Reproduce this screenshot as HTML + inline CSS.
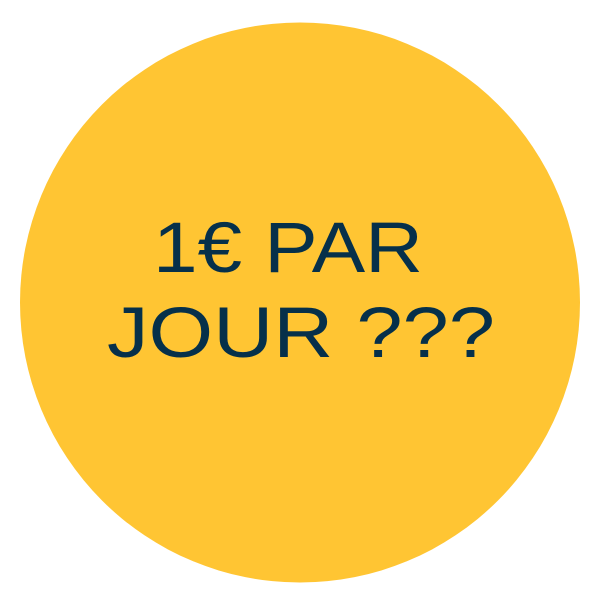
<!DOCTYPE html>
<html><head><style>html,body{margin:0;padding:0;background:#fff;}</style></head>
<body>
<svg width="600" height="600" viewBox="0 0 600 600" xmlns="http://www.w3.org/2000/svg">
<circle cx="300" cy="302.5" r="280" fill="#FFC533"/>
<g font-family="'Liberation Sans', sans-serif" font-size="71" fill="#06304A">
<text x="153" y="272" textLength="270" lengthAdjust="spacingAndGlyphs">1€ PAR</text>
<text x="107" y="357" textLength="388" lengthAdjust="spacingAndGlyphs">JOUR ???</text>
</g>
</svg>
</body></html>
